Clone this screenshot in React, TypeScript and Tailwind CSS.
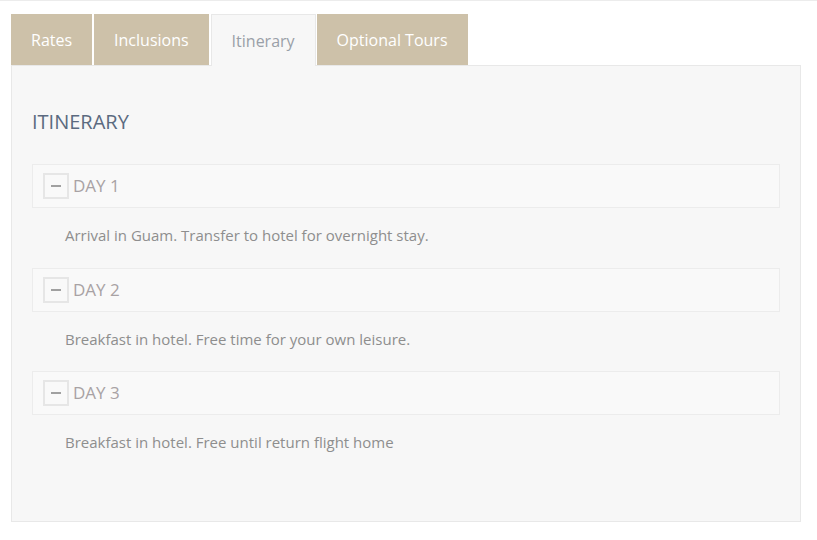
const tabs = ["Rates", "Inclusions", "Itinerary", "Optional Tours"];

const days = [
  { title: "DAY 1", text: "Arrival in Guam. Transfer to hotel for overnight stay." },
  { title: "DAY 2", text: "Breakfast in hotel. Free time for your own leisure." },
  { title: "DAY 3", text: "Breakfast in hotel. Free until return flight home" },
];

const DayItem = ({ title, text }: { title: string; text: string }) => {
  return (
    <div>
      <div className="flex h-[44px] items-center border border-[#ececec] bg-[#f9f9f9] pl-[10px]">
        <span className="flex h-[26px] w-[26px] items-center justify-center border-2 border-[#e6e6e6]">
          <span className="block h-[2px] w-[10px] bg-[#a0a0a0]" />
        </span>
        <span className="ml-[4px] text-[17px] text-[#a8a2a4]">{title}</span>
      </div>
      <p className="pl-[33px] pt-[17px] pb-[22.5px] text-[15px] leading-5 text-[#8e8e8e]">{text}</p>
    </div>
  );
}

export default function App() {
  return (
    <div className="h-[540px] w-[817px] border-t border-[#ececec] bg-white font-['Open_Sans',sans-serif]">
      <div className="px-[11px] pt-[13px]">
        <div className="flex">
          {tabs.map((t) => {
            const active = t === "Itinerary";
            return (
              <div
                key={t}
                className={
                  active
                    ? "relative z-10 mr-[1px] flex h-[52px] items-center border border-b-0 border-[#e8e8e8] bg-[#f7f7f7] px-5 text-[16px] text-[#9aa0a8]"
                    : "mr-[2px] flex h-[51px] items-center bg-[#cdc1a9] px-5 text-[16px] text-white"
                }
              >
                {t}
              </div>
            );
          })}
        </div>
        <div className="-mt-[1px] h-[457px] w-[790px] border border-[#e8e8e8] bg-[#f7f7f7] px-[20px] pt-[43px]">
          <h2 className="text-[20px] leading-[26px] text-[#5b6a80]">ITINERARY</h2>
          <div className="mt-[29px]">
            {days.map((d) => (
              <DayItem key={d.title} title={d.title} text={d.text} />
            ))}
          </div>
        </div>
      </div>
    </div>
  );
}
